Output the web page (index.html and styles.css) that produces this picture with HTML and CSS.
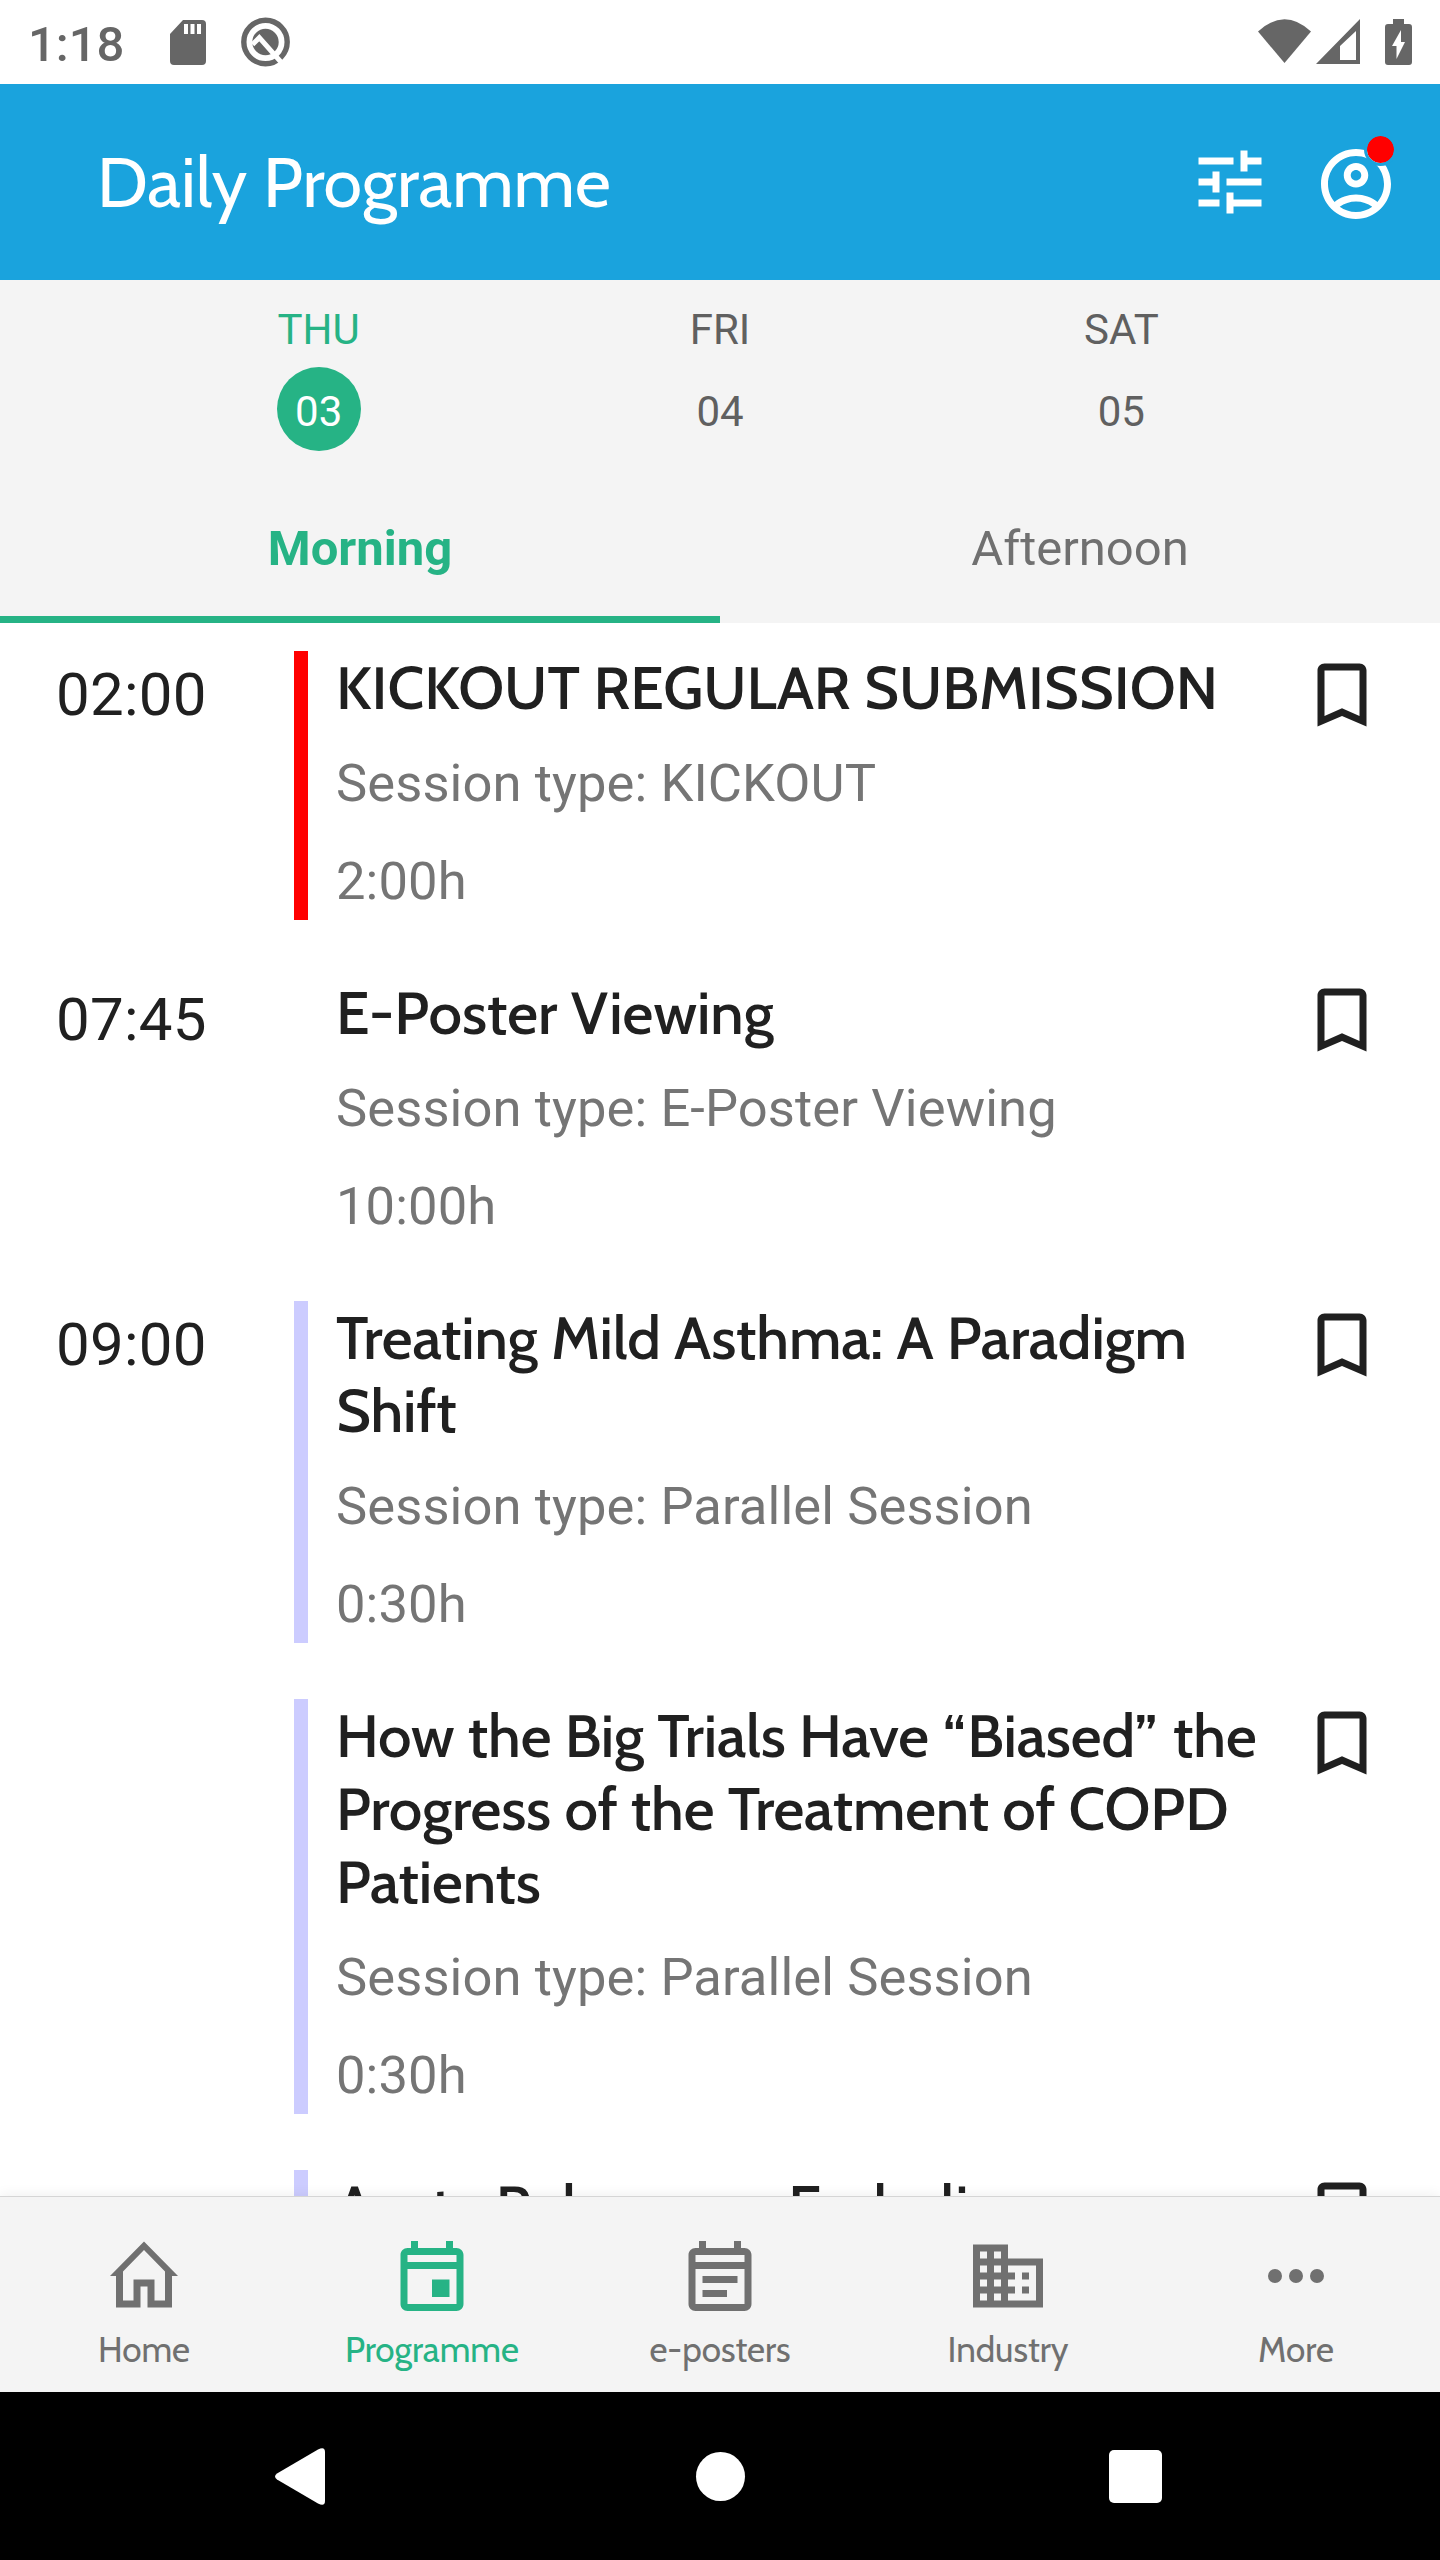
FILE: index.html
```html
<!DOCTYPE html>
<html lang="en">
<head>
    <meta charset="UTF-8">
    <meta name="viewport" content="width=device-width, initial-scale=1.0">
    <title>Daily Programme</title>
    <link rel="stylesheet" href="styles.css">
</head>
<body>
    <div class="screen">
        <div class="status-bar">
            <span class="clock">1:18</span>
            <svg class="sd-icon" width="36" height="45" viewBox="0 0 36 45"><path fill="#666" fill-rule="evenodd" d="M13 0h19q4 0 4 4v37q0 4-4 4H4q-4 0-4-4V14zM14 4v10h4V4zM20.500 4v10h4V4zM27 4v10h4V4z"/></svg>
            <svg class="q-icon" width="50" height="50" viewBox="0 0 50 50">
                <circle cx="24.500" cy="25" r="21.700" fill="none" stroke="#666" stroke-width="5.400"/>
                <circle cx="24.500" cy="25" r="13.200" fill="#666"/>
                <path d="M11.500 27.500L18.300 20.700L43 48.500" fill="none" stroke="#fff" stroke-width="5"/>
            </svg>
            <div class="status-right">
                <svg width="53" height="45" viewBox="0 0 53 45"><path fill="#666" d="M0 12.500Q26.500-12 53 12.500L26.500 44z"/></svg>
                <svg class="signal" width="44" height="45" viewBox="0 0 44 45"><path fill="#666" fill-rule="evenodd" d="M44 0v45H0zM40 12L24 27v14h16z"/></svg>
                <svg class="battery" width="27" height="46" viewBox="0 0 27 46"><path fill="#666" fill-rule="evenodd" d="M8 0h11v5h5q3 0 3 3v35q0 3-3 3H3q-3 0-3-3V8q0-3 3-3h5zM16 11L7 27h4.500v13L20 23h-4z"/></svg>
            </div>
        </div>

        <header class="app-bar">
            <h1>Daily Programme</h1>
            <svg class="tune" width="84" height="84" viewBox="0 0 24 24"><path fill="#fff" d="M3 17v2h6v-2H3zM3 5v2h10V5H3zm10 16v-2h8v-2h-8v-2h-2v6h2zM7 9v2H3v2h4v2h2V9H7zm14 4v-2H11v2h10zm-6-4h2V7h4V5h-4V3h-2v6z"/></svg>
            <div class="account">
                <svg width="84" height="84" viewBox="0 0 24 24"><path fill="#fff" d="M12 2C6.480 2 2 6.480 2 12s4.480 10 10 10 10-4.480 10-10S17.520 2 12 2zM7.350 18.500C8.660 17.560 10.260 17 12 17s3.340.56 4.650 1.500C15.340 19.440 13.740 20 12 20s-3.340-.56-4.650-1.500zm10.790-1.380C16.450 15.800 14.320 15 12 15s-4.450.8-6.140 2.120C4.700 15.730 4 13.950 4 12c0-4.420 3.580-8 8-8s8 3.580 8 8c0 1.950-.7 3.730-1.860 5.120z"/><path fill="#fff" d="M12 6c-1.930 0-3.500 1.570-3.500 3.500S10.070 13 12 13s3.500-1.570 3.500-3.500S13.930 6 12 6zm0 5c-.83 0-1.500-.67-1.500-1.500S11.170 8 12 8s1.500.67 1.500 1.500S12.830 11 12 11z"/></svg>
                <span class="badge"></span>
            </div>
        </header>

        <div class="days">
            <div class="day active"><span>THU</span><b>03</b></div>
            <div class="day"><span>FRI</span><b>04</b></div>
            <div class="day"><span>SAT</span><b>05</b></div>
        </div>
        <div class="tabs">
            <div class="tab active">Morning</div>
            <div class="tab">Afternoon</div>
        </div>

        <main class="sessions">
            <div class="session">
                <div class="time">02:00</div>
                <div class="info red">
                    <h2>KICKOUT REGULAR SUBMISSION</h2>
                    <p>Session type: KICKOUT</p>
                    <p>2:00h</p>
                </div>
                <svg class="bookmark" width="84" height="84" viewBox="0 0 24 24"><path d="M17 3H7c-1.100 0-2 .9-2 2v16l7-3 7 3V5c0-1.100-.9-2-2-2zm0 15l-5-2.180L7 18V5h10v13z"/></svg>
            </div>
            <div class="session">
                <div class="time">07:45</div>
                <div class="info">
                    <h2>E-Poster Viewing</h2>
                    <p>Session type: E-Poster Viewing</p>
                    <p>10:00h</p>
                </div>
                <svg class="bookmark" width="84" height="84" viewBox="0 0 24 24"><path d="M17 3H7c-1.100 0-2 .9-2 2v16l7-3 7 3V5c0-1.100-.9-2-2-2zm0 15l-5-2.180L7 18V5h10v13z"/></svg>
            </div>
            <div class="session">
                <div class="time">09:00</div>
                <div class="info lilac">
                    <h2>Treating Mild Asthma: A Paradigm<br>Shift</h2>
                    <p>Session type: Parallel Session</p>
                    <p>0:30h</p>
                </div>
                <svg class="bookmark" width="84" height="84" viewBox="0 0 24 24"><path d="M17 3H7c-1.100 0-2 .9-2 2v16l7-3 7 3V5c0-1.100-.9-2-2-2zm0 15l-5-2.180L7 18V5h10v13z"/></svg>
            </div>
            <div class="session">
                <div class="time"></div>
                <div class="info lilac">
                    <h2>How the Big Trials Have <span class="quote">“</span>Biased<span class="quote">”</span> the<br>Progress of the Treatment of COPD<br>Patients</h2>
                    <p>Session type: Parallel Session</p>
                    <p>0:30h</p>
                </div>
                <svg class="bookmark" width="84" height="84" viewBox="0 0 24 24"><path d="M17 3H7c-1.100 0-2 .9-2 2v16l7-3 7 3V5c0-1.100-.9-2-2-2zm0 15l-5-2.180L7 18V5h10v13z"/></svg>
            </div>
            <div class="session">
                <div class="time"></div>
                <div class="info lilac">
                    <h2>Acute Pulmonary Embolism</h2>
                </div>
                <svg class="bookmark" width="84" height="84" viewBox="0 0 24 24"><path d="M17 3H7c-1.100 0-2 .9-2 2v16l7-3 7 3V5c0-1.100-.9-2-2-2zm0 15l-5-2.180L7 18V5h10v13z"/></svg>
            </div>
        </main>

        <nav class="bottom-nav">
            <a class="nav-item">
                <svg width="84" height="84" viewBox="0 0 84 84"><path fill-rule="evenodd" d="M42 7.500L76 42h-6v31.500H45.500v-21h-7v21H14V42H8zM42 16L21 37.500v29h10.500v-21h21v21H63v-29z"/></svg>
                <span>Home</span>
            </a>
            <a class="nav-item active">
                <svg width="84" height="84" viewBox="0 0 24 24"><path fill-rule="evenodd" d="M6 2h2v2h8V2h2v2h1c1.100 0 2 .9 2 2v14c0 1.100-.9 2-2 2H5c-1.100 0-2-.9-2-2V6c0-1.100.9-2 2-2h1zM5 6v2h14V6zM5 10v10h14V10zM12 13h5v5h-5z"/></svg>
                <span>Programme</span>
            </a>
            <a class="nav-item">
                <svg width="84" height="84" viewBox="0 0 24 24"><path fill-rule="evenodd" d="M6 2h2v2h8V2h2v2h1c1.100 0 2 .9 2 2v14c0 1.100-.9 2-2 2H5c-1.100 0-2-.9-2-2V6c0-1.100.9-2 2-2h1zM5 6v2h14V6zM5 10v10h14V10zM7 12h10v2H7zM7 16h7v2H7z"/></svg>
                <span>e-posters</span>
            </a>
            <a class="nav-item">
                <svg width="84" height="84" viewBox="0 0 24 24"><path d="M12 7V3H2v18h20V7H12zM6 19H4v-2h2v2zm0-4H4v-2h2v2zm0-4H4V9h2v2zm0-4H4V5h2v2zm4 12H8v-2h2v2zm0-4H8v-2h2v2zm0-4H8V9h2v2zm0-4H8V5h2v2zm10 12h-8v-2h2v-2h-2v-2h2v-2h-2V9h8v10zm-2-8h-2v2h2v-2zm0 4h-2v2h2v-2z"/></svg>
                <span>Industry</span>
            </a>
            <a class="nav-item">
                <svg width="84" height="84" viewBox="0 0 24 24"><path d="M6 10a2 2 0 100 4 2 2 0 000-4zm12 0a2 2 0 100 4 2 2 0 000-4zm-6 0a2 2 0 100 4 2 2 0 000-4z"/></svg>
                <span>More</span>
            </a>
        </nav>

        <div class="system-nav">
            <svg class="back" width="50" height="57" viewBox="0 0 50 57"><path fill="#fff" d="M2 25.500L43 1.500Q50-2 50 4v49q0 6-7 2.500L2 31.500q-4-3 0-6z"/></svg>
            <span class="circle"></span>
            <span class="square"></span>
        </div>
    </div>
</body>
</html>
```
FILE: styles.css
```css
body {
    margin: 0;
    font-family: Roboto, sans-serif;
    background-color: #fff;
}
svg {
    display: block;
    flex: none;
}
.screen {
    width: 1440px;
    height: 2560px;
    display: flex;
    flex-direction: column;
    overflow: hidden;
}

/* Status bar */
.status-bar {
    height: 84px;
    flex: none;
    display: flex;
    align-items: flex-start;
    box-sizing: border-box;
    padding: 0 28px;
}
.clock {
    width: 142px;
    margin-top: 16px;
    font-size: 49px;
    line-height: 58px;
    font-weight: 500;
    color: #666;
}
.sd-icon {
    margin-top: 20px;
}
.q-icon {
    margin: 17px 0 0 35px;
}
.status-right {
    margin-left: auto;
    margin-top: 19px;
    display: flex;
}
.signal {
    margin-left: 5px;
}
.battery {
    margin-left: 25px;
}

/* App bar */
.app-bar {
    height: 196px;
    flex: none;
    display: flex;
    align-items: center;
    box-sizing: border-box;
    padding: 0 42px 0 97px;
    background-color: #1aa3dd;
}
h1 {
    flex: 1;
    margin: 0;
    font-family: Cabin, Lato, sans-serif;
    font-size: 70px;
    line-height: 84px;
    font-weight: 400;
    color: #fff;
}
.account {
    position: relative;
    margin: 3px 0 0 42px;
}
.badge {
    position: absolute;
    left: 50px;
    top: -9px;
    width: 27px;
    height: 27px;
    border: 3px solid #1aa3dd;
    border-radius: 50%;
    background-color: #f00;
    background-clip: padding-box;
}

/* Days */
.days {
    height: 210px;
    flex: none;
    display: flex;
    box-sizing: border-box;
    padding: 10px 118px 0;
    background-color: #f4f4f4;
    font-size: 42px;
    color: #606060;
}
.day {
    flex: 1;
    display: flex;
    flex-direction: column;
    align-items: center;
}
.day span {
    height: 77px;
    line-height: 79px;
}
.day b {
    width: 84px;
    height: 84px;
    line-height: 89px;
    border-radius: 50%;
    text-align: center;
    font-weight: 400;
}
.day.active {
    color: #26b385;
}
.day.active b {
    background-color: #26b385;
    color: #fff;
}

/* Morning / afternoon tabs */
.tabs {
    height: 133px;
    flex: none;
    display: flex;
    background-color: #f4f4f4;
}
.tab {
    flex: 1;
    box-sizing: border-box;
    text-align: center;
    font-size: 49px;
    line-height: 118px;
    color: #707070;
    border-bottom: 7px solid transparent;
}
.tab.active {
    font-weight: 700;
    color: #26b385;
    border-color: #26b385;
}

/* Sessions */
.sessions {
    flex: 1;
    min-height: 0;
    overflow: hidden;
    display: flex;
    flex-direction: column;
    gap: 56px;
    padding-top: 28px;
    background-color: #fff;
}
.session {
    flex: none;
    display: flex;
    align-items: stretch;
}
.time {
    width: 238px;
    padding: 9px 0 0 56px;
    font-size: 60px;
    letter-spacing: 0.25px;
    line-height: 70px;
    color: #202020;
}
.info {
    width: 978px;
    margin-right: 28px;
    box-sizing: border-box;
    padding: 0 0 8px 28px;
    border-left: 14px solid transparent;
    white-space: nowrap;
}
.info.red {
    border-color: #f00;
}
.info.lilac {
    border-color: #ccf;
}
h2 {
    margin: 0 0 28px;
    font-family: Cabin, Lato, sans-serif;
    font-size: 60px;
    line-height: 73px;
    font-weight: 500;
    color: #202020;
}
.lilac h2 {
    letter-spacing: -0.14px;
}
.quote {
    letter-spacing: 2px;
}
.info p {
    margin: 0;
    font-size: 52.5px;
    letter-spacing: 0.1px;
    line-height: 62px;
    color: #757575;
}
.info p + p {
    margin-top: 36px;
}
.bookmark {
    margin-top: 2px;
    fill: #202020;
}

/* Bottom navigation */
.bottom-nav {
    position: relative;
    height: 196px;
    flex: none;
    display: flex;
    background-color: #f4f4f4;
    box-shadow: inset 0 1px 0 #d5d5d5, 0 -2px 12px rgba(0, 0, 0, 0.06);
}
.nav-item {
    flex: 1;
    padding-top: 38px;
    display: flex;
    flex-direction: column;
    align-items: center;
    font-family: Cabin, Lato, sans-serif;
    font-size: 35px;
    line-height: 42px;
    color: #707070;
    fill: #707070;
}
.nav-item span {
    margin-top: 11px;
}
.nav-item.active {
    color: #26b385;
    fill: #26b385;
}

/* System buttons */
.system-nav {
    position: relative;
    height: 168px;
    flex: none;
    display: flex;
    align-items: center;
    box-sizing: border-box;
    padding: 0 278px 0 275px;
    background-color: #000;
    justify-content: space-between;
}
.circle {
    width: 49px;
    height: 49px;
    margin-left: 6px;
    border-radius: 50%;
    background-color: #fff;
}
.square {
    width: 53px;
    height: 53px;
    border-radius: 5px;
    background-color: #fff;
}
```
